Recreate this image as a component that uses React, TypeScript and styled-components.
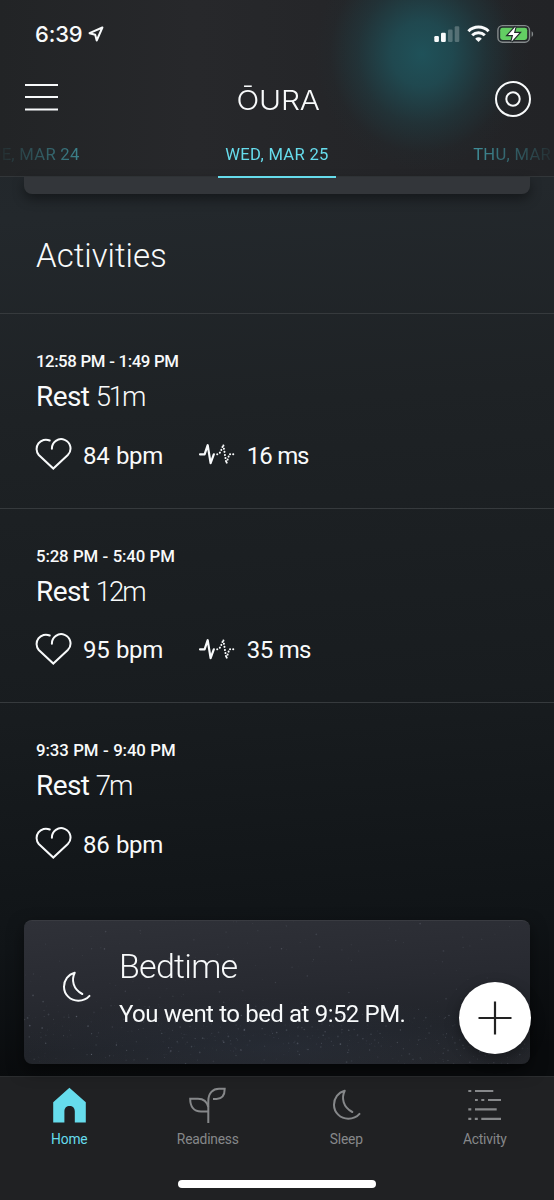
import React from "react";
import styled, { createGlobalStyle } from "styled-components";

const GlobalStyle = createGlobalStyle`
  *, *::before, *::after { box-sizing: border-box; }
  body { margin: 0; background: #111518; }
  svg { display: block; flex: none; }
  button { border: 0; padding: 0; background: none; color: inherit; font: inherit; }
`;

const accent = "#66dcec";

const Screen = styled.div`
  position: relative;
  display: flex;
  flex-direction: column;
  width: 554px;
  height: 1200px;
  overflow: hidden;
  color: #f8fafb;
  font-family: Roboto, "Liberation Sans", sans-serif;
  background: linear-gradient(176deg, #1f2529 0, #23282c 220px, #1e2225 420px, #181c1f 720px, #101417 950px, #090b0d 1080px);
`;

const Header = styled.header`
  display: flex;
  flex-direction: column;
  flex: none;
  height: 177px;
  border-bottom: 1px solid #323639;
  background:
    radial-gradient(ellipse 108px 116px at 422px 54px, rgba(31, 84, 92, 0.95) 0, rgba(31, 80, 88, 0.82) 28%, rgba(31, 66, 73, 0.45) 60%, rgba(32, 48, 53, 0.14) 85%, transparent 100%),
    linear-gradient(90deg, #222426 0, #27282b 35%, #242528 70%, #222326 100%);
`;

const StatusBar = styled.div`
  display: flex;
  align-items: center;
  flex: none;
  height: 68px;
  padding: 0 20px 0 35px;
`;

const Clock = styled.span`
  margin-right: 6px;
  font: 500 22px/26px Inter, sans-serif;
  letter-spacing: -0.2px;
`;

const StatusIcons = styled.div`
  display: flex;
  align-items: center;
  gap: 7px;
  margin-left: auto;
`;

const NavBar = styled.div`
  display: grid;
  grid-template-columns: 40px 1fr 40px;
  align-items: center;
  flex: none;
  height: 60px;
  padding: 0 22px 0 25px;
`;

const Logo = styled.span`
  justify-self: center;
  padding-top: 3px;
  font: 350 27.5px/36px Inter, sans-serif;
  letter-spacing: -0.2px;
  transform: scaleX(1.09);
`;

const NavButton = styled.button<{ $end?: boolean }>`
  justify-self: ${(p) => (p.$end ? "end" : "start")};
  padding-top: ${(p) => (p.$end ? 1 : 0)}px;
`;

const DateTabs = styled.nav`
  display: flex;
  flex: none;
  justify-content: center;
  gap: 129px;
  height: 50px;
  margin-bottom: -2px;
  mask-image: linear-gradient(90deg, rgba(0, 0, 0, 0.08) 0, #000 90px, #000 475px, rgba(0, 0, 0, 0.08) 554px);
`;

const DateTab = styled.span<{ $active?: boolean }>`
  flex: none;
  width: 118px;
  padding-top: 17px;
  color: ${(p) => (p.$active ? accent : "#3f8d98")};
  border-bottom: 2px solid ${(p) => (p.$active ? accent : "transparent")};
  font-size: 16.6px;
  line-height: 20px;
  font-weight: 450;
  letter-spacing: 0.3px;
  text-align: center;
  white-space: nowrap;
`;

const Content = styled.main`
  display: flex;
  flex-direction: column;
  flex: 1;
  min-height: 0;
`;

const CardEdge = styled.div`
  flex: none;
  height: 17px;
  margin: 0 24px;
  border-radius: 0 0 8px 8px;
  background: #33363a;
  box-shadow: 0 5px 12px rgba(0, 0, 0, 0.4);
`;

const SectionTitle = styled.h1`
  flex: none;
  height: 119px;
  margin: 0;
  padding: 41px 36px 0;
  font-size: 33px;
  line-height: 42px;
  font-weight: 300;
`;

const ActivityRow = styled.section`
  flex: none;
  height: 194.5px;
  padding: 36px 36px 0;
  border-top: 1px solid #363a3d;
`;

const TimeRange = styled.div<{ $tracking: number }>`
  font-size: 16.8px;
  line-height: 22px;
  font-weight: 500;
  letter-spacing: ${(p) => p.$tracking}px;
  word-spacing: 0.5px;
`;

const ActivityName = styled.h2<{ $tracking: number }>`
  margin: 7px 0 0;
  font-size: 28px;
  line-height: 36px;
  font-weight: 400;
  letter-spacing: -0.6px;

  span {
    font-size: 27.5px;
    font-weight: 300;
    letter-spacing: ${(p) => p.$tracking}px;
  }
`;

const Metrics = styled.div`
  display: flex;
  align-items: center;
  gap: 37px;
  height: 36px;
  margin-top: 22px;
`;

const Metric = styled.div<{ $tracking?: number }>`
  display: flex;
  align-items: center;
  gap: 11px;
  margin-left: -1px;
  font-size: 24px;
  line-height: 36px;
  letter-spacing: ${(p) => p.$tracking ?? -0.35}px;
  word-spacing: 1px;
  white-space: nowrap;

  svg { margin-top: -2px; }
  span { padding-top: 1px; }
`;

const BedtimeCard = styled.article`
  position: relative;
  flex: none;
  display: flex;
  align-items: center;
  height: 144px;
  margin: 23px 24px 0;
  padding: 0 0 11px 38px;
  border-radius: 8px;
  overflow: hidden;
  border-top: 1px solid #393b41;
  background:
    radial-gradient(ellipse 260px 50px at 50% 88%, rgba(52, 62, 80, 0.25), transparent),
    linear-gradient(176deg, #2f3138 0, #282a31 45%, #21242a 75%, #24262b 100%);
`;

const CardShadow = styled.div`
  flex: none;
  border-radius: 8px;
  filter: drop-shadow(0 6px 8px rgba(0, 0, 0, 0.5));
`;

const StarField = styled.svg`
  position: absolute;
  inset: 0;
`;

const CardText = styled.div`
  position: relative;
  margin-left: 28px;
`;

const CardTitle = styled.h2`
  margin: 0;
  font-size: 34px;
  line-height: 46px;
  font-weight: 300;
  letter-spacing: -0.75px;
`;

const CardBody = styled.p`
  margin: 9px 0 0;
  font-size: 24px;
  line-height: 32px;
  letter-spacing: -0.55px;
  word-spacing: 0.4px;
  white-space: nowrap;
`;

const AddButton = styled.button`
  position: absolute;
  right: 23px;
  bottom: 146px;
  display: grid;
  place-items: center;
  width: 72px;
  height: 72px;
  border-radius: 50%;
  background: #fff;
  box-shadow: 0 5px 14px rgba(0, 0, 0, 0.35);
`;

const TabBar = styled.footer`
  display: flex;
  flex-direction: column;
  align-items: center;
  justify-content: space-between;
  flex: none;
  height: 124px;
  padding-bottom: 12px;
  border-top: 1px solid #2b2d2f;
  background: #202123;
`;

const TabList = styled.nav`
  display: flex;
  width: 100%;
`;

const Tab = styled.a<{ $active?: boolean }>`
  flex: 1;
  display: flex;
  flex-direction: column;
  align-items: center;
  padding-top: 10px;
  color: ${(p) => (p.$active ? accent : "#86888a")};
  font-size: 13.8px;
  line-height: 18px;
  font-weight: 450;
  letter-spacing: -0.2px;

  span { margin-top: 7px; }
`;

const TabGlyph = styled.div`
  display: grid;
  place-items: center;
  height: 36px;
`;

const HomeIndicator = styled.div`
  width: 198px;
  height: 8px;
  border-radius: 4px;
  background: #fff;
`;

const HeartIcon = () => (
  <svg width="37" height="32" viewBox="0 0 37 32" fill="none" stroke="currentColor" strokeWidth="2" strokeLinecap="round">
    <path d="M14.7 2.5A9.3 9.3 0 0 0 3.8 17L18.3 30.6 32.8 17A9.3 9.3 0 1 0 16.9 10.7" />
  </svg>
);

const VariabilityIcon = () => (
  <svg width="37" height="22" viewBox="0 -1 37 22" fill="none" stroke="currentColor" strokeLinejoin="round" strokeLinecap="round">
    <path d="M1 10.3H5.6L8.7 1.2 11.6 19.2 14.8 10.3" strokeWidth="2.2" />
    <path d="M18.2 10.3 21.5 8.2 24.3.8 27.4 19.4 30.3 10.3H36" strokeWidth="2" strokeDasharray="0.1 3.05" />
  </svg>
);

const MoonIcon = () => (
  <svg width="29" height="32" viewBox="0 0 29 32" fill="none" stroke="currentColor" strokeWidth="2" strokeLinecap="round" strokeLinejoin="round">
    <path d="M20.3 23C11 18 9.2 9 12.7 1.7 6.2 3.5 2 9.2 2 15.7 2 23.5 8.3 29.7 16.3 29.7 20.8 29.7 24.8 28 27.5 24.9" />
  </svg>
);

const HomeIcon = () => (
  <svg width="33" height="36" viewBox="0 0 33 36" fill="currentColor">
    <path d="M16.4.7 32.8 15.2V35.5H21.8V24.5C21.8 20.8 19.6 19 16.6 19S11.4 20.8 11.4 24.5V35.5H.2V15.2Z" />
  </svg>
);

const SproutIcon = () => (
  <svg width="37" height="36" viewBox="0 0 37 36" fill="none" stroke="currentColor" strokeWidth="2">
    <path d="M19.3 36V14C19.3 6 24 1.8 30 1.8H35.7C35.7 8.5 33 11.9 27.5 11.9H24" />
    <path d="M19.3 20C18 14.5 14.5 11.7 9 11.7H1.2C1.2 19 4.5 24.5 12 24.5H19.3" />
  </svg>
);

const ActivityIcon = () => (
  <svg width="34" height="36" viewBox="0 0 34 36" fill="none" stroke="currentColor" strokeWidth="2.2">
    <path d="M.3 4h3M7 4h18.3M7 13h2.8M13.3 13h3M20 13h13M.3 22.4h3M7 22.4h21.7M.3 31.8h3M6.8 31.8h3M13.3 31.8H33" />
  </svg>
);

const LocationIcon = () => (
  <svg width="16" height="16" viewBox="0 0 16 16" fill="none" stroke="currentColor" strokeWidth="2" strokeLinejoin="round">
    <path d="M14.4 1.5 1.5 7.2 7.2 8.8 8.7 14.5Z" />
  </svg>
);

const SignalIcon = () => (
  <svg width="26" height="18" viewBox="0 0 26 18" fill="currentColor">
    <rect x=".3" y="11" width="4.6" height="6" rx="1.2" />
    <rect x="7" y="7.7" width="4.8" height="9.3" rx="1.2" />
    <rect x="14" y="4.5" width="4.6" height="12.5" rx="1.2" opacity=".25" />
    <rect x="20.7" y="1.2" width="4.6" height="15.8" rx="1.2" opacity=".25" />
  </svg>
);

const WifiIcon = () => (
  <svg width="23" height="18" viewBox="0 0 23 18" fill="none" stroke="currentColor" strokeWidth="3">
    <path d="M1.4 6.2A14.4 14.4 0 0 1 21.6 6.2" />
    <path d="M5.2 10.2A9 9 0 0 1 17.8 10.2" />
    <path d="M8.2 13.7A4.7 4.7 0 0 1 14.8 13.7L11.5 17Z" fill="currentColor" stroke="none" />
  </svg>
);

const BatteryIcon = () => (
  <svg width="37" height="20" viewBox="0 0 37 20">
    <rect x=".9" y="1.6" width="31.6" height="16.6" rx="4.6" fill="none" stroke="#858a8c" strokeWidth="1.4" />
    <path d="M34.6 7.2C36.6 8 36.6 12 34.6 12.8Z" fill="#858a8c" />
    <rect x="3.2" y="3.8" width="27" height="12.2" rx="2.4" fill="#63ce63" />
    <path d="M18.6 2.5 11 11h5.1l-1.7 6.7L22.2 9h-5.2Z" fill="#fff" stroke="#222a2c" strokeWidth="2.4" paintOrder="stroke" />
  </svg>
);

/* Small deterministic generator so the night sky looks the same on each render. */
const makeStars = (count: number) => {
  let seed = 4217;
  const next = () => {
    seed = (seed * 16807) % 2147483647;
    return seed / 2147483647;
  };
  return Array.from({ length: count }, () => {
    const x = next() * 506;
    const band = next() < 0.65;
    const y = band ? 106 + x * 0.04 + (next() + next() - 1) * 38 : next() * 144;
    return { x, y, r: 0.4 + next() * 0.5, o: 0.04 + next() * next() * (band ? 0.3 : 0.16) };
  });
};

const stars = makeStars(600);

const activities = [
  { time: "12:58 PM - 1:49 PM", timeTracking: -0.46, length: "51m", lengthTracking: -2.1, bpm: 84, ms: 16, msTracking: -1.2 },
  { time: "5:28 PM - 5:40 PM", timeTracking: -0.15, length: "12m", lengthTracking: -2, bpm: 95, ms: 35, msTracking: -0.7 },
  { time: "9:33 PM - 9:40 PM", timeTracking: -0.1, length: "7m", lengthTracking: -2, bpm: 86 },
];

const tabs = [
  { label: "Home", Icon: HomeIcon },
  { label: "Readiness", Icon: SproutIcon },
  { label: "Sleep", Icon: MoonIcon },
  { label: "Activity", Icon: ActivityIcon },
];

export default function App() {
  return (
    <Screen>
      <GlobalStyle />
      <Header>
        <StatusBar>
          <Clock>6:39</Clock>
          <LocationIcon />
          <StatusIcons>
            <SignalIcon />
            <WifiIcon />
            <BatteryIcon />
          </StatusIcons>
        </StatusBar>
        <NavBar>
          <NavButton aria-label="Menu">
            <svg width="33" height="28" viewBox="0 0 33 28" stroke="currentColor" strokeWidth="2">
              <path d="M0 1H33M0 13H33M0 25.5H33" />
            </svg>
          </NavButton>
          <Logo>ŌURA</Logo>
          <NavButton $end aria-label="Ring">
            <svg width="38" height="38" viewBox="0 0 38 38" fill="none" stroke="currentColor" strokeWidth="2">
              <circle cx="19" cy="19" r="17" />
              <circle cx="19" cy="19" r="6.7" />
            </svg>
          </NavButton>
        </NavBar>
        <DateTabs>
          <DateTab>TUE, MAR 24</DateTab>
          <DateTab $active>WED, MAR 25</DateTab>
          <DateTab>THU, MAR 26</DateTab>
        </DateTabs>
      </Header>
      <Content>
        <CardEdge />
        <SectionTitle>Activities</SectionTitle>
        {activities.map((a) => (
          <ActivityRow key={a.time}>
            <TimeRange $tracking={a.timeTracking}>{a.time}</TimeRange>
            <ActivityName $tracking={a.lengthTracking}>
              Rest <span>{a.length}</span>
            </ActivityName>
            <Metrics>
              <Metric>
                <HeartIcon />
                <span>{a.bpm} bpm</span>
              </Metric>
              {a.ms && (
                <Metric $tracking={a.msTracking}>
                  <VariabilityIcon />
                  <span>{a.ms} ms</span>
                </Metric>
              )}
            </Metrics>
          </ActivityRow>
        ))}
        <CardShadow>
          <BedtimeCard>
            <StarField width="506" height="144" fill="#c9d2e6">
              {stars.map((s, i) => (
                <circle key={i} cx={s.x} cy={s.y} r={s.r} opacity={s.o} />
              ))}
            </StarField>
            <MoonIcon />
            <CardText>
              <CardTitle>Bedtime</CardTitle>
              <CardBody>You went to bed at 9:52 PM.</CardBody>
            </CardText>
          </BedtimeCard>
        </CardShadow>
      </Content>
      <TabBar>
        <TabList>
          {tabs.map(({ label, Icon }, i) => (
            <Tab key={label} $active={i === 0}>
              <TabGlyph>
                <Icon />
              </TabGlyph>
              <span>{label}</span>
            </Tab>
          ))}
        </TabList>
        <HomeIndicator />
      </TabBar>
      <AddButton aria-label="Add">
        <svg width="34" height="34" viewBox="0 0 34 34" stroke="#222" strokeWidth="2.2">
          <path d="M17 .5V33.5M.5 17H33.5" />
        </svg>
      </AddButton>
    </Screen>
  );
}
